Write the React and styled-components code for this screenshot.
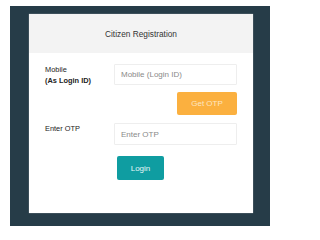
import React from 'react';
import styled, { createGlobalStyle } from 'styled-components';

const GlobalStyle = createGlobalStyle`
  html, body {
    margin: 0;
    padding: 0;
    background: #ffffff;
    font-family: "Liberation Sans", Arial, sans-serif;
  }
`;

const Page = styled.div`
  padding: 6px 6px 4px 10px;
`;

const Backdrop = styled.div`
  width: 260px;
  height: 220px;
  background: #263c48;
  padding: 8px 0 0 19px;
  box-sizing: border-box;
`;

const Card = styled.div`
  width: 224px;
  height: 199px;
  background: #ffffff;
  box-shadow: 0 0 1px rgba(255, 255, 255, 0.6);
  display: flex;
  flex-direction: column;
`;

const Header = styled.div`
  height: 39px;
  background: #f3f3f3;
  display: flex;
  align-items: center;
  justify-content: center;
  font-size: 8.3px;
  color: #333;
`;

const Body = styled.div`
  padding: 10px 16px 0 16px;
  display: grid;
  grid-template-columns: 69px 123px;
  row-gap: 0;
`;

const Label = styled.div`
  font-size: 7.4px;
  line-height: 11px;
  color: #222;
  padding-top: ${(p) => p.$top || 0}px;
`;

const Strong = styled.div`
  font-weight: bold;
`;

const Input = styled.input`
  box-sizing: border-box;
  width: 123px;
  height: ${(p) => p.$h}px;
  margin-top: ${(p) => p.$mt}px;
  border: 1px solid #eeeeee;
  border-radius: 1px;
  padding: 0 6px;
  font-family: "Liberation Sans", Arial, sans-serif;
  font-size: 8px;
  color: #333;
  outline: none;
  &::placeholder {
    color: #8a8a8a;
  }
`;

const Actions = styled.div`
  grid-column: 2;
  display: flex;
  justify-content: ${(p) => p.$align};
  padding-top: ${(p) => p.$pt}px;
  padding-left: ${(p) => p.$pl || 0}px;
`;

const Button = styled.button`
  border: none;
  border-radius: 2px;
  width: ${(p) => p.$w}px;
  height: ${(p) => p.$h}px;
  background: ${(p) => p.$bg};
  color: ${(p) => p.$fg};
  font-family: "Liberation Sans", Arial, sans-serif;
  font-size: 8px;
  padding: 0;
  cursor: pointer;
`;

export default function App() {
  return (
    <>
      <GlobalStyle />
      <Page>
        <Backdrop>
          <Card>
            <Header>Citizen Registration</Header>
            <Body>
              <Label $top={1}>
                Mobile
                <Strong>(As Login ID)</Strong>
              </Label>
              <Input $h={21} $mt={1} placeholder="Mobile (Login ID)" />
              <Actions $align="flex-end" $pt={6}>
                <Button $w={60} $h={23} $bg="#fbb03f" $fg="#fde6c2">
                  Get OTP
                </Button>
              </Actions>
              <Label $top={8}>Enter OTP</Label>
              <Input $h={22} $mt={8} placeholder="Enter OTP" />
              <Actions $align="flex-start" $pt={11} $pl={3}>
                <Button $w={47} $h={24} $bg="#0f9da1" $fg="#e6f6f6">
                  Login
                </Button>
              </Actions>
            </Body>
          </Card>
        </Backdrop>
      </Page>
    </>
  );
}
